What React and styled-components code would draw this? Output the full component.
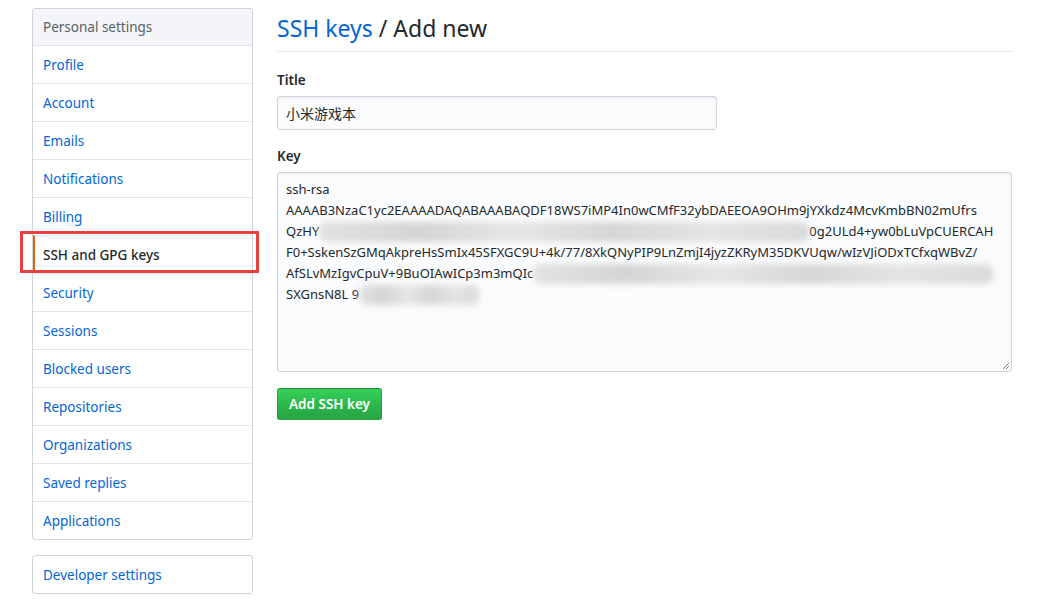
import React from "react";
import styled, { createGlobalStyle } from "styled-components";

const GlobalStyle = createGlobalStyle`
  body {
    margin: 0;
    background: #fff;
    font-family: "Noto Sans", "Noto Sans CJK SC", sans-serif;
    font-size: 14px;
    color: #24292e;
  }
`;

const Page = styled.div`
  display: flex;
  gap: 24px;
  padding: 8px 0 0 32px;
  width: 1012px;
  box-sizing: border-box;
`;

const Sidebar = styled.div`
  width: 221px;
  flex-shrink: 0;
  display: flex;
  flex-direction: column;
  gap: 15px;
`;

const Menu = styled.nav`
  border: 1px solid #d1d5da;
  border-radius: 3px;
  background: #fff;
`;

const MenuHeading = styled.div`
  height: 36px;
  display: flex;
  align-items: center;
  padding: 0 10px;
  background: #f3f5f8;
  color: #586069;
  font-size: 13.5px;
  border-radius: 3px 3px 0 0;
`;

const MenuItem = styled.a`
  position: relative;
  height: 37px;
  display: flex;
  align-items: center;
  padding: 0 10px;
  font-size: 13.5px;
  color: ${({ active }) => (active ? "#24292e" : "#0366d6")};
  font-weight: ${({ active }) => (active ? 500 : 400)};
  border-top: ${({ first }) => (first ? "none" : "1px solid #e1e4e8")};
  border-left: ${({ active }) => (active ? "2px solid #e36209" : "none")};
  padding-left: ${({ active }) => (active ? "8px" : "10px")};
  text-decoration: none;
  cursor: pointer;
`;

const Highlight = styled.span`
  position: absolute;
  left: -15px;
  top: -5px;
  width: 233px;
  height: 36px;
  border: 3px solid #e8403e;
  pointer-events: none;
`;

const Main = styled.div`
  flex: 1;
  padding-top: 5px;
`;

const Heading = styled.h2`
  margin: 0 0 18px;
  padding-bottom: 8px;
  border-bottom: 1px solid #e1e4e8;
  font-size: 23px;
  font-weight: 400;
  line-height: 30px;
  color: #24292e;
`;

const Crumb = styled.a`
  color: #0366d6;
  text-decoration: none;
`;

const Label = styled.label`
  display: block;
  font-weight: 600;
  font-size: 13.5px;
  line-height: 21px;
  margin-bottom: 5px;
`;

const Field = styled.div`
  margin-bottom: 16px;
`;

const Input = styled.div`
  width: 440px;
  height: 34px;
  box-sizing: border-box;
  padding: 0 8px;
  display: flex;
  align-items: center;
  background: #fafbfc;
  border: 1px solid #d1d5da;
  border-radius: 3px;
  box-shadow: inset 0 1px 2px rgba(27, 31, 35, 0.075);
  font-size: 14px;
`;

const KeyArea = styled.div`
  position: relative;
  height: 200px;
  box-sizing: border-box;
  padding: 6px 8px;
  background: #fafbfc;
  border: 1px solid #d1d5da;
  border-radius: 3px;
  box-shadow: inset 0 1px 2px rgba(27, 31, 35, 0.075);
  font-size: 13px;
  line-height: 21px;
  color: #24292e;
  overflow: hidden;
`;

const KeyLine = styled.div`
  white-space: nowrap;
  display: flex;
  align-items: center;
`;

const Blur = styled.span`
  display: inline-block;
  width: ${({ w }) => w}px;
  height: 20px;
  background: linear-gradient(
    90deg,
    #e2e2e2 0%,
    #d4d4d4 20%,
    #e6e6e6 40%,
    #d6d6d6 60%,
    #e4e4e4 80%,
    #dadada 100%
  );
  border-radius: 8px;
  filter: blur(3px);
`;

const Grip = styled.svg`
  position: absolute;
  right: 1px;
  bottom: 1px;
`;

const Button = styled.button`
  height: 32px;
  padding: 0 11px;
  border: 1px solid rgba(27, 31, 35, 0.2);
  border-radius: 3px;
  background: linear-gradient(#34d058, #28a745 90%);
  color: #fff;
  font-family: inherit;
  font-size: 13.5px;
  font-weight: 600;
  cursor: pointer;
`;

const items = [
  "Profile",
  "Account",
  "Emails",
  "Notifications",
  "Billing",
  "SSH and GPG keys",
  "Security",
  "Sessions",
  "Blocked users",
  "Repositories",
  "Organizations",
  "Saved replies",
  "Applications",
];

export default function App() {
  return (
    <>
      <GlobalStyle />
      <Page>
        <Sidebar>
          <Menu>
            <MenuHeading>Personal settings</MenuHeading>
            {items.map((name) => (
              <MenuItem key={name} active={name === "SSH and GPG keys"}>
                {name}
                {name === "SSH and GPG keys" && <Highlight />}
              </MenuItem>
            ))}
          </Menu>
          <Menu>
            <MenuItem first>Developer settings</MenuItem>
          </Menu>
        </Sidebar>
        <Main>
          <Heading>
            <Crumb>SSH keys</Crumb> / Add new
          </Heading>
          <Field>
            <Label>Title</Label>
            <Input>小米游戏本</Input>
          </Field>
          <Field>
            <Label>Key</Label>
            <KeyArea>
              <KeyLine>ssh-rsa</KeyLine>
              <KeyLine>AAAAB3NzaC1yc2EAAAADAQABAAABAQDF18WS7iMP4In0wCMfF32ybDAEEOA9OHm9jYXkdz4McvKmbBN02mUfrs</KeyLine>
              <KeyLine>
                QzHY
                <Blur w={490} />
                0g2ULd4+yw0bLuVpCUERCAH
              </KeyLine>
              <KeyLine>F0+SskenSzGMqAkpreHsSmIx45SFXGC9U+4k/77/8XkQNyPIP9LnZmjI4jyzZKRyM35DKVUqw/wIzVJiODxTCfxqWBvZ/</KeyLine>
              <KeyLine>
                AfSLvMzIgvCpuV+9BuOIAwICp3m3mQIc
                <Blur w={460} />
              </KeyLine>
              <KeyLine>
                SXGnsN8L 9
                <Blur w={120} />
              </KeyLine>
              <Grip width="10" height="10" viewBox="0 0 10 10">
                <path d="M9 3L3 9M9 6L6 9" stroke="#888" strokeWidth="1" />
              </Grip>
            </KeyArea>
          </Field>
          <Button>Add SSH key</Button>
        </Main>
      </Page>
    </>
  );
}
